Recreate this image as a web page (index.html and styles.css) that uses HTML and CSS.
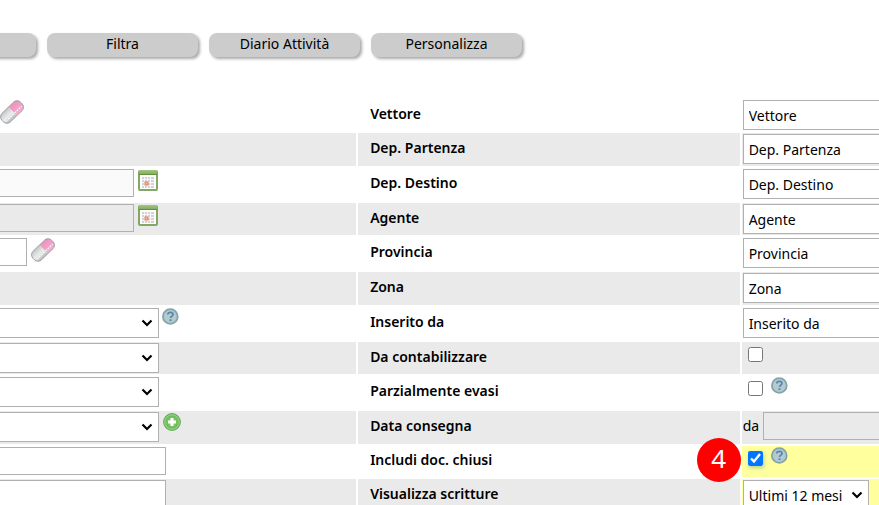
FILE: index.html
```html
<!DOCTYPE html>
<html lang="it">

<head>
  <meta charset="utf-8">
  <meta name="viewport" content="width=device-width, initial-scale=1.0">
  <title>Filtra documenti</title>
  <link rel="stylesheet" href="styles.css">
</head>

<body>

  <!-- Shared icons -->
  <svg class="defs" width="0" height="0" aria-hidden="true">
    <defs>
      <linearGradient id="gPink" x1="0" y1="0" x2="0" y2="1">
        <stop offset="0" stop-color="#eb92bd"/>
        <stop offset="1" stop-color="#f4b0d0"/>
      </linearGradient>
      <linearGradient id="gGrey" x1="0" y1="0" x2="0" y2="1">
        <stop offset="0" stop-color="#c3c6c7"/>
        <stop offset=".55" stop-color="#eceeee"/>
        <stop offset="1" stop-color="#b5b8b9"/>
      </linearGradient>
      <linearGradient id="gBar" x1="0" y1="0" x2="0" y2="1">
        <stop offset="0" stop-color="#a3c681"/>
        <stop offset="1" stop-color="#7ba655"/>
      </linearGradient>
      <radialGradient id="gPlus">
        <stop offset="0" stop-color="#8fd06c"/>
        <stop offset="1" stop-color="#62b455"/>
      </radialGradient>
      <symbol id="eraser" viewBox="0 0 24 24">
        <g transform="rotate(-44 12 12)">
          <path d="M13 6H4A5 5 0 0 0-1 11v2a5 5 0 0 0 5 5h9z" fill="url(#gGrey)"/>
          <path d="M13 6h7a5 5 0 0 1 5 5v2a5 5 0 0 1-5 5h-7z" fill="url(#gPink)"/>
          <rect x="-1" y="6" width="26" height="12" rx="5" fill="none" stroke="#9c9c9e" stroke-width=".9"/>
          <path d="M1 14.500h22" stroke="#fff" stroke-width="1" stroke-dasharray="2 1"/>
        </g>
      </symbol>
      <symbol id="calendar" viewBox="0 0 20 21">
        <rect x="1" y="1" width="18" height="19" rx="1" fill="#fff" stroke="#82a865" stroke-width="2"/>
        <rect x="1" y="0" width="18" height="5" fill="url(#gBar)"/>
        <path d="M1 4.500h18" stroke="#64903e"/>
        <rect x="4" y="7" width="12" height="11" fill="#d4d4d4"/>
        <path d="M4 9.500h12M4 12.500h12M4 15.500h12M6.500 7v11M9.500 7v11M12.500 7v11" stroke="#fff" stroke-width=".8"/>
        <rect x="7" y="12" width="3" height="3" fill="#f3b39e" stroke="#e08267"/>
      </symbol>
      <symbol id="help" viewBox="0 0 17 17">
        <circle cx="8.300" cy="8.500" r="7.400" fill="#b3cbcf" stroke="#84a4a9" stroke-width="1.800"/>
        <path d="M5.800 6.600c0-3 5.200-3 5.200 0 0 1.700-2.500 1.700-2.500 3.500" fill="none" stroke="#5886ae" stroke-width="1.700"/>
        <rect x="7.500" y="11.300" width="2" height="1.800" fill="#5886ae"/>
      </symbol>
      <symbol id="plus" viewBox="0 0 18 18">
        <circle cx="9" cy="9" r="8.400" fill="url(#gPlus)" stroke="#62aa5b" stroke-width="1"/>
        <circle cx="9" cy="9" r="7.200" fill="none" stroke="#a0d98a" stroke-width="1"/>
        <path d="M9 5v8M5 9h8" stroke="#fff" stroke-width="3"/>
      </symbol>
    </defs>
  </svg>

  <div class="page">
    <div class="toolbar">
      <button type="button" aria-label="Menu"></button>
      <button type="button">Filtra</button>
      <button type="button">Diario Attività</button>
      <button type="button">Personalizza</button>
    </div>

    <form>
      <table class="filters">
        <colgroup>
          <col class="col-left">
          <col class="col-label">
          <col>
        </colgroup>
        <tr>
          <td><div class="field"><svg class="eraser"><use href="#eraser"/></svg></div></td>
          <th><label for="vettore">Vettore</label></th>
          <td><div class="field"><select id="vettore" class="wide"><option>Vettore</option></select></div></td>
        </tr>
        <tr>
          <td></td>
          <th><label for="partenza">Dep. Partenza</label></th>
          <td><div class="field"><select id="partenza" class="wide"><option>Dep. Partenza</option></select></div></td>
        </tr>
        <tr>
          <td><div class="field"><input type="text" class="cut date" aria-label="Dal" readonly><svg class="calendar"><use href="#calendar"/></svg></div></td>
          <th><label for="destino">Dep. Destino</label></th>
          <td><div class="field"><select id="destino" class="wide"><option>Dep. Destino</option></select></div></td>
        </tr>
        <tr>
          <td><div class="field"><input type="text" class="cut date off" aria-label="Al" readonly><svg class="calendar"><use href="#calendar"/></svg></div></td>
          <th><label for="agente">Agente</label></th>
          <td><div class="field"><select id="agente" class="wide"><option>Agente</option></select></div></td>
        </tr>
        <tr>
          <td><div class="field"><input type="text" class="cut code" aria-label="Codice"><svg class="eraser"><use href="#eraser"/></svg></div></td>
          <th><label for="provincia">Provincia</label></th>
          <td><div class="field"><select id="provincia" class="wide"><option>Provincia</option></select></div></td>
        </tr>
        <tr>
          <td></td>
          <th><label for="zona">Zona</label></th>
          <td><div class="field"><select id="zona" class="wide"><option>Zona</option></select></div></td>
        </tr>
        <tr>
          <td><div class="field"><select class="cut list" aria-label="Stato"><option></option></select><svg class="help"><use href="#help"/></svg></div></td>
          <th><label for="inserito">Inserito da</label></th>
          <td><div class="field"><select id="inserito" class="wide"><option>Inserito da</option></select></div></td>
        </tr>
        <tr>
          <td><div class="field"><select class="cut list" aria-label="Tipo"><option></option></select></div></td>
          <th><label for="contabilizzare">Da contabilizzare</label></th>
          <td><div class="field"><input type="checkbox" id="contabilizzare"></div></td>
        </tr>
        <tr>
          <td><div class="field"><select class="cut list" aria-label="Causale"><option></option></select></div></td>
          <th><label for="evasi">Parzialmente evasi</label></th>
          <td><div class="field"><input type="checkbox" id="evasi"><svg class="help"><use href="#help"/></svg></div></td>
        </tr>
        <tr>
          <td><div class="field"><select class="cut list" aria-label="Categoria"><option></option></select><svg class="plus"><use href="#plus"/></svg></div></td>
          <th><label for="consegna">Data consegna</label></th>
          <td><div class="field"><span class="from">da</span><input type="text" id="consegna" class="wide off" readonly></div></td>
        </tr>
        <tr class="closed">
          <td><div class="field"><input type="text" class="cut text" aria-label="Riferimento"></div></td>
          <th><label for="chiusi">Includi doc. chiusi</label></th>
          <td class="marked">
            <div class="field"><input type="checkbox" id="chiusi" checked><svg class="help"><use href="#help"/></svg></div>
            <span class="badge">4</span>
          </td>
        </tr>
        <tr>
          <td><div class="field"><textarea class="cut text" aria-label="Note"></textarea></div></td>
          <th><label for="scritture">Visualizza scritture</label></th>
          <td class="marked"><div class="field"><select id="scritture" class="period"><option>Ultimi 12 mesi</option></select></div></td>
        </tr>
      </table>
    </form>
  </div>

</body>

</html>
```

FILE: styles.css
```css
* {
  box-sizing: border-box;
}

body {
  margin: 0;
  background-color: #ffffff;
  color: #000000;
  font-family: "Noto Sans", "Open Sans", sans-serif;
  font-size: 14px;
}

.defs {
  position: absolute;
}

.page {
  height: 100vh;
  padding-top: 33px;
  overflow: hidden;
}

/* Buttons over the filters, the first one starts off screen */

.toolbar {
  display: flex;
  gap: 11px;
  margin-left: -115px;
  margin-bottom: 40px;
}

.toolbar button {
  flex: none;
  width: 151px;
  height: 24px;
  padding: 0 0 3px;
  border: none;
  border-radius: 8px;
  background-color: #cccccc;
  box-shadow: 2px 2px 3px #aaaaaa;
  color: #000000;
  font: inherit;
  cursor: pointer;
}

/* Filter table */

.filters {
  width: calc(100% + 4px);
  margin: 0 -2px;
  table-layout: fixed;
  border-spacing: 2px;
}

.col-left {
  width: 40.7%;
}

.col-label {
  width: 43.6%;
}

.filters tr {
  height: 33px;
}

.filters tr:first-child,
.filters tr:nth-child(4n) {
  height: 32px;
}

.filters tr.closed {
  height: 31px;
}

.filters tr:nth-child(even) td,
.filters tr:nth-child(even) th {
  background-color: #eaeaea;
}

.filters td {
  padding: 1px 0 0;
  vertical-align: top;
}

.filters td + th + td {
  padding-left: 1px;
}

.filters th {
  padding: 0 12px 4px;
  text-align: left;
  font-weight: 600;
}

.filters tr td.marked {
  position: relative;
  background-color: #ffff9e;
}

.field {
  display: flex;
  align-items: flex-start;
  height: 30px;
}

.closed .field {
  height: 28px;
}

/* Controls */

select,
input[type="text"],
textarea {
  flex: none;
  height: 28px;
  margin: 0;
  padding: 0 4px;
  border: 1px solid #b0b0b0;
  border-radius: 0;
  background-color: #ffffff;
  color: #000000;
  font: inherit;
}

select {
  -webkit-appearance: none;
  appearance: none;
  height: 30px;
  padding: 0 20px 0 5px;
  background-image: url("data:image/svg+xml,%3Csvg xmlns='http://www.w3.org/2000/svg' width='12' height='8'%3E%3Cpath d='M1.500 1.500L6 6l4.500-4.500' fill='none' stroke='%23000' stroke-width='2.200'/%3E%3C/svg%3E");
  background-repeat: no-repeat;
  background-position: right 5px center;
}

textarea {
  height: 60px;
  resize: none;
}

input[readonly] {
  background-color: #fafafa;
}

input.off[readonly] {
  background-color: #eaeaea;
}

.wide {
  width: 300px;
}

.cut {
  border-left: none !important;
}

.code {
  width: 27px;
}

.date {
  width: 134px;
}

.list {
  width: 159px;
}

.text {
  width: 166px;
}

.period {
  width: 126px;
}

input[type="checkbox"] {
  flex: none;
  width: 15px;
  height: 15px;
  margin: 4px 8px 0 5px;
}

.closed input[type="checkbox"] {
  box-shadow: 1px 2px 4px #b8cf90;
}

.from {
  flex: none;
  width: 20px;
  line-height: 28px;
}

/* Icons */

.field svg {
  flex: none;
}

.eraser {
  width: 24px;
  height: 24px;
}

.code + .eraser,
.date + .calendar {
  margin-left: 4px;
}

.calendar {
  width: 20px;
  height: 21px;
  margin-top: 1px;
}

.help {
  width: 17px;
  height: 17px;
}

.list + .help {
  margin-left: 3px;
}

.plus {
  width: 18px;
  height: 18px;
  margin-top: 1px;
  margin-left: 4px;
}

/* Step number over the highlighted cell */

.badge {
  position: absolute;
  top: -8px;
  left: -45px;
  width: 44px;
  height: 44px;
  border-radius: 50%;
  background-color: #ff0000;
  color: #ffffff;
  font-size: 26px;
  line-height: 40px;
  text-align: center;
}
```
